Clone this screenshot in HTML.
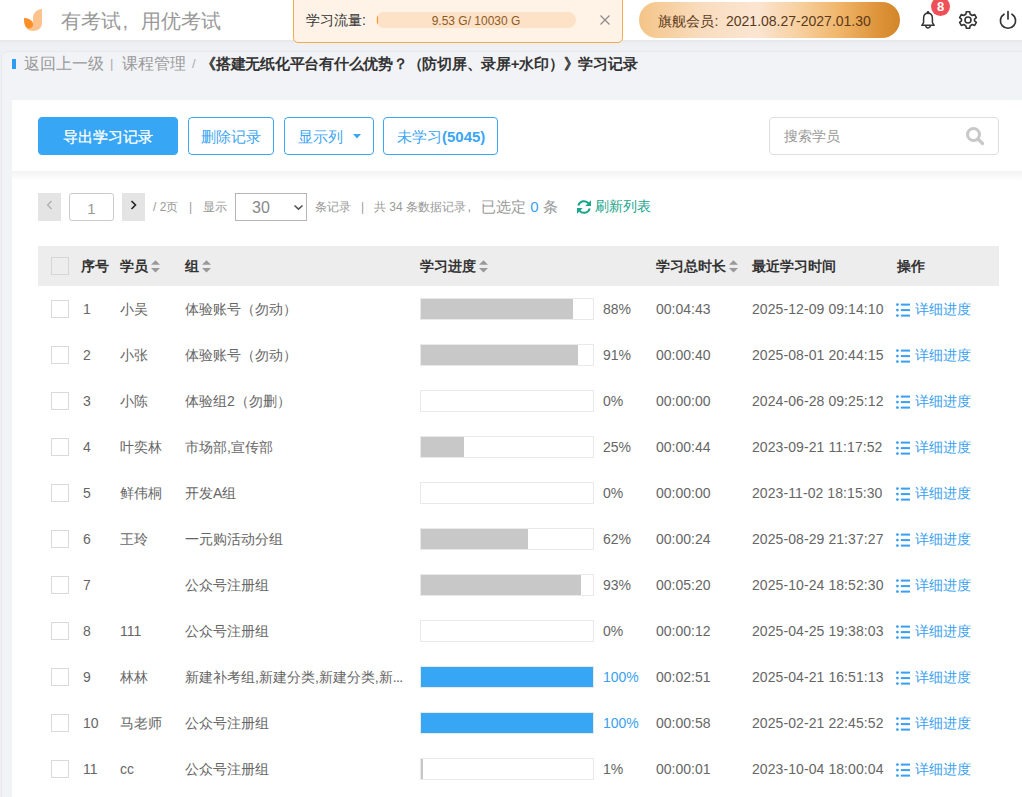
<!DOCTYPE html><html><head><meta charset="utf-8"><style>*{box-sizing:border-box;margin:0;padding:0}
html,body{width:1022px;height:797px;overflow:hidden}
body{background:#eef0f4;font-family:"Liberation Sans",sans-serif;position:relative;color:#666}
.abs{position:absolute}
#hdr{position:absolute;left:0;top:0;width:1022px;height:40px;background:#fff}
#band{position:absolute;left:0;top:40px;width:1022px;height:12px;background:linear-gradient(#e4e6ea,#eef0f4 4px,#eef0f4)}
#cont{position:absolute;left:1px;top:51px;width:1030px;height:760px;background:#f2f3f7;border-radius:7px;border:1px solid #e8e9ed}
.logo{position:absolute;left:22px;top:7px}
.slogan{position:absolute;left:61px;top:7px;font-size:20px;line-height:28px;color:#999;white-space:nowrap}
#flow{position:absolute;left:293px;top:-2px;width:330px;height:45px;background:#fff3e8;border:1px solid #f5a94e;border-radius:0 0 5px 5px}
#flow .lbl{position:absolute;left:12px;top:11px;font-size:14px;line-height:20px;color:#333}
#flow .pill{position:absolute;left:82px;top:13px;width:200px;height:16px;border-radius:8px;background:#fde2c8;overflow:hidden}
#flow .pill i{position:absolute;left:0.5px;top:4.3px;width:1.7px;height:7.4px;border-radius:50%;background:#f7931e}
#flow .pill span{position:absolute;left:0;top:1px;width:100%;text-align:center;font-size:12px;line-height:16px;color:#8d5a25}
#flow .x{position:absolute;left:305px;top:15px;transform:scale(0.9)}
#vip{position:absolute;left:639px;top:2px;width:261px;height:36px;border-radius:18px;background:linear-gradient(90deg,#f4c487 0%,#f9dcbd 23%,#fbe5d2 45%,#f7cf9d 62%,#f0b56a 77%,#dd9338 92%,#d3862a 100%);font-size:14px;line-height:38px;color:#5b3a1a;padding-left:19px;white-space:nowrap}
.badge{position:absolute;left:931px;top:-3px;width:19px;height:19px;border-radius:50%;background:#ef4f57;color:#fff;font-size:13px;font-weight:bold;text-align:center;line-height:19px}
.crumb{position:absolute;top:53px;font-size:16px;line-height:22px;color:#999;white-space:nowrap}
.bluebar{position:absolute;left:12px;top:59px;width:4px;height:10px;background:#2d9cf4}
#card{position:absolute;left:12px;top:100px;width:1010px;height:71px;background:#fff}
#card2{position:absolute;left:12px;top:171px;width:1010px;height:640px;background:#fff}
#shadow{position:absolute;left:12px;top:171px;width:1010px;height:9px;background:linear-gradient(#f3f3f3,#f7f7f7 40%,#fff)}
.btn{position:absolute;top:117px;height:38px;border:1px solid #3ba6f4;border-radius:4px;color:#3ba6f4;font-size:15px;line-height:37px;white-space:nowrap}
.btn.pri{background:#36a6f5;border-color:#36a6f5;color:#fff;-webkit-text-stroke:0.3px #fff}
.search{position:absolute;left:769px;top:117px;width:230px;height:38px;border:1px solid #dedede;border-radius:4px}
.search span{position:absolute;left:14px;top:0;font-size:14px;line-height:36px;color:#999}
.pg{position:absolute;top:193px;height:28px;font-size:12px;line-height:28px;color:#999;white-space:nowrap}
.pgbtn{position:absolute;top:193px;width:23px;height:28px;background:#e4e4e4}
#thead{position:absolute;left:38px;top:246px;width:961px;height:40px;background:#ededed}
.th{position:absolute;top:246px;font-size:14px;line-height:40px;font-weight:bold;color:#333;white-space:nowrap}
.sort{display:inline-block;vertical-align:middle;margin-left:3px;margin-top:-1px}
.cb{position:absolute;left:51px;top:14px;width:18px;height:18px;border:1px solid #dadada;background:#fff}
.row{position:absolute;left:0;width:1022px;height:46px}
.c{position:absolute;top:0;font-size:14px;line-height:46px;color:#666;white-space:nowrap}
.c1{left:83px}.c2{left:120px}.c3{left:185px}.pct{left:603px}.c5{left:656px}.c6{left:752px;letter-spacing:0.08px}.c7{left:896px;color:#3a9ff0}
.blue{color:#3a9ff0}
.bar{position:absolute;left:420px;top:12px;width:174px;height:22px;border:1px solid #e9e9e9;background:#fff}
.fill{position:absolute;left:0;top:0;height:20px;background:#c8c8c8}
.fill.full{background:#36a6f5;width:172px}
.li{fill:#3a9ff0;position:absolute;left:0;top:17px}
.c7 span{margin-left:19px}
</style></head><body>
<div id="band"></div>
<div id="cont"></div>
<div id="hdr"></div>
<svg class="logo" width="24" height="28" viewBox="22 7 24 28">
<path d="M42 9 L42 23 C42 28 38 31 33 31 C28 31 24 28 24 18 C28 18 31 20 33 22 L33 18 C33 13 37 9 42 9 Z" fill="#fdc38e"/>
<path d="M24 18 C29 18 33 21 33 25 C33 27 31 28.5 29 28.5 C26 28.5 24 25 24 18 Z" fill="#fd8f26"/>
</svg>
<div class="slogan">有考试<span style="display:inline-block;width:20px;padding-left:1.5px">,</span>用优考试</div>
<div id="flow"><div class="lbl">学习流量:</div><div class="pill"><i></i><span>9.53 G/ 10030 G</span></div>
<svg class="x" width="12" height="12" viewBox="0 0 12 12"><path d="M1 1L11 11M11 1L1 11" stroke="#888" stroke-width="1.2"/></svg></div>
<div id="vip">旗舰会员<span style="display:inline-block;width:12px;padding-left:0.5px">:</span>2021.08.27-2027.01.30</div>
<svg class="abs" style="left:919px;top:10px" width="18" height="20" viewBox="0 0 18 20"><path d="M9 3.2 C6.2 3.2 4.6 5.3 4.6 8.2 L4.6 12.6 L2.8 15.3 L15.2 15.3 L13.4 12.6 L13.4 8.2 C13.4 5.3 11.8 3.2 9 3.2 Z" fill="none" stroke="#333" stroke-width="1.5" stroke-linejoin="round"/><path d="M6.7 15.6 A2.3 2.3 0 0 0 11.3 15.6" fill="none" stroke="#333" stroke-width="1.5"/><circle cx="9" cy="2.4" r="1.4" fill="#333"/></svg>
<div class="badge">8</div>
<svg class="abs" style="left:958px;top:10px" width="20" height="20" viewBox="0 0 20 20"><path fill="none" stroke="#333" stroke-width="1.6" stroke-linejoin="round" d="M8.3 1.8 L11.7 1.8 L12.2 4.3 L14.3 5.5 L16.7 4.6 L18.4 7.6 L16.5 9.2 L16.5 10.8 L18.4 12.4 L16.7 15.4 L14.3 14.5 L12.2 15.7 L11.7 18.2 L8.3 18.2 L7.8 15.7 L5.7 14.5 L3.3 15.4 L1.6 12.4 L3.5 10.8 L3.5 9.2 L1.6 7.6 L3.3 4.6 L5.7 5.5 L7.8 4.3 Z"/><circle cx="10" cy="10" r="3" fill="none" stroke="#333" stroke-width="1.6"/></svg>
<svg class="abs" style="left:998px;top:10px" width="20" height="20" viewBox="0 0 20 20"><path fill="none" stroke="#333" stroke-width="1.7" stroke-linecap="round" d="M6 4.2 A7.6 7.6 0 1 0 14 4.2"/><path stroke="#333" stroke-width="1.7" stroke-linecap="round" d="M10 1.5 L10 9"/></svg>

<div class="bluebar"></div>
<div class="crumb" style="left:24px">返回上一级</div>
<div class="crumb" style="left:110px;font-size:13px;color:#aaa">|</div>
<div class="crumb" style="left:122px">课程管理</div>
<div class="crumb" style="left:192px;font-size:13px;color:#aaa">/</div>
<div class="crumb" style="left:201px;font-size:15px;font-weight:bold;color:#333;letter-spacing:-0.25px">《搭建无纸化平台有什么优势？（防切屏、录屏+水印）》学习记录</div>

<div id="card2"></div>
<div id="shadow"></div>
<div id="card"></div>
<div class="btn pri" style="left:38px;width:140px;text-align:center">导出学习记录</div>
<div class="btn" style="left:188px;width:86px;text-align:center">删除记录</div>
<div class="btn" style="left:284px;width:90px;padding-left:13px">显示列<svg class="abs" style="left:68px;top:16px" width="8" height="5" viewBox="0 0 8 5"><path d="M0 0L8 0L4 4.5Z" fill="#3ba6f4"/></svg></div>
<div class="btn" style="left:383px;width:115px;padding-left:13px">未学习<b>(5045)</b></div>
<div class="search"><span>搜索学员</span><svg class="abs" style="left:195px;top:8px" width="20" height="20" viewBox="0 0 20 20"><circle cx="8.5" cy="8.5" r="6" fill="none" stroke="#c8c8c8" stroke-width="3"/><path d="M13 13L17.5 17.5" stroke="#c8c8c8" stroke-width="3.2" stroke-linecap="round"/></svg></div>

<div class="pgbtn" style="left:38px"><svg class="abs" style="left:8px;top:7px" width="7" height="10" viewBox="0 0 7 10"><path d="M5.5 1L1.5 5L5.5 9" fill="none" stroke="#aaa" stroke-width="1.1"/></svg></div>
<div class="abs" style="left:69px;top:193px;width:45px;height:28px;border:1px solid #ccc;border-radius:3px;background:#fff;text-align:center;font-size:15px;line-height:29px;color:#999">1</div>
<div class="pgbtn" style="left:122px"><svg class="abs" style="left:8px;top:7px" width="7" height="10" viewBox="0 0 7 10"><path d="M1.5 1L5.5 5L1.5 9" fill="none" stroke="#222" stroke-width="1.6"/></svg></div>
<div class="pg" style="left:153px">/ 2页</div>
<div class="pg" style="left:189px">|</div>
<div class="pg" style="left:203px">显示</div>
<div class="abs" style="left:235px;top:193px;width:72px;height:28px;border:1px solid #b5b5b5;background:#fff;font-size:16px;line-height:28px;color:#888;padding-left:16px">30<svg class="abs" style="left:57px;top:10px" width="11" height="7" viewBox="0 0 11 7"><path d="M1.5 1.5L5.5 5.2L9.5 1.5" fill="none" stroke="#555" stroke-width="1.6"/></svg></div>
<div class="pg" style="left:315px">条记录</div>
<div class="pg" style="left:361px">|</div>
<div class="pg" style="left:374px">共 34 条数据记录<span style="display:inline-block;width:12px;padding-left:1.5px;font-size:13px">,</span></div>
<div class="pg" style="left:481px;font-size:15px;color:#999">已选定 <span style="color:#3a9ff0">0</span> 条</div>
<svg class="abs" style="left:577px;top:200px" width="14" height="14" viewBox="0 0 14 14"><path d="M1.3 5.6 A5.9 5.9 0 0 1 11.6 3.4" fill="none" stroke="#1aa58c" stroke-width="2"/><path d="M14 0.2 L14 5.9 L8.3 5.9 Z" fill="#1aa58c"/><path d="M12.7 8.4 A5.9 5.9 0 0 1 2.4 10.6" fill="none" stroke="#1aa58c" stroke-width="2"/><path d="M0 13.8 L0 8.1 L5.7 8.1 Z" fill="#1aa58c"/></svg>
<div class="pg" style="left:595px;top:192px;font-size:14px;color:#1aa58c">刷新列表</div>

<div id="thead"></div>
<div class="abs" style="left:51px;top:257px;width:18px;height:18px;border:1px solid #d6d6d6"></div>
<div class="th" style="left:81px">序号</div>
<div class="th" style="left:120px">学员<svg class="sort" width="9" height="13" viewBox="0 0 9 13"><path d="M4.5 0.3L9 4.8L0 4.8Z M4.5 12.5L9 8L0 8Z" fill="#999"/></svg></div>
<div class="th" style="left:185px">组<svg class="sort" width="9" height="13" viewBox="0 0 9 13"><path d="M4.5 0.3L9 4.8L0 4.8Z M4.5 12.5L9 8L0 8Z" fill="#999"/></svg></div>
<div class="th" style="left:420px">学习进度<svg class="sort" width="9" height="13" viewBox="0 0 9 13"><path d="M4.5 0.3L9 4.8L0 4.8Z M4.5 12.5L9 8L0 8Z" fill="#999"/></svg></div>
<div class="th" style="left:656px">学习总时长<svg class="sort" width="9" height="13" viewBox="0 0 9 13"><path d="M4.5 0.3L9 4.8L0 4.8Z M4.5 12.5L9 8L0 8Z" fill="#999"/></svg></div>
<div class="th" style="left:752px">最近学习时间</div>
<div class="th" style="left:897px">操作</div>

<div class="row" style="top:286px"><div class="cb"></div><div class="c c1">1</div><div class="c c2">小吴</div><div class="c c3">体验账号（勿动）</div><div class="bar"><div class="fill" style="width:152px"></div></div><div class="c pct">88%</div><div class="c c5">00:04:43</div><div class="c c6">2025-12-09 09:14:10</div><div class="c c7"><svg class="li" width="14" height="15" viewBox="0 0 14 15"><circle cx="1.4" cy="1.6" r="1.4"/><rect x="4.8" y="0.6" width="9.2" height="2"/><circle cx="1.4" cy="7.1" r="1.4"/><rect x="4.8" y="6.1" width="9.2" height="2"/><circle cx="1.4" cy="12.6" r="1.4"/><rect x="4.8" y="11.6" width="9.2" height="2"/></svg><span>详细进度</span></div></div>
<div class="row" style="top:332px"><div class="cb"></div><div class="c c1">2</div><div class="c c2">小张</div><div class="c c3">体验账号（勿动）</div><div class="bar"><div class="fill" style="width:157px"></div></div><div class="c pct">91%</div><div class="c c5">00:00:40</div><div class="c c6">2025-08-01 20:44:15</div><div class="c c7"><svg class="li" width="14" height="15" viewBox="0 0 14 15"><circle cx="1.4" cy="1.6" r="1.4"/><rect x="4.8" y="0.6" width="9.2" height="2"/><circle cx="1.4" cy="7.1" r="1.4"/><rect x="4.8" y="6.1" width="9.2" height="2"/><circle cx="1.4" cy="12.6" r="1.4"/><rect x="4.8" y="11.6" width="9.2" height="2"/></svg><span>详细进度</span></div></div>
<div class="row" style="top:378px"><div class="cb"></div><div class="c c1">3</div><div class="c c2">小陈</div><div class="c c3">体验组2（勿删）</div><div class="bar"><div class="fill" style="width:0px"></div></div><div class="c pct">0%</div><div class="c c5">00:00:00</div><div class="c c6">2024-06-28 09:25:12</div><div class="c c7"><svg class="li" width="14" height="15" viewBox="0 0 14 15"><circle cx="1.4" cy="1.6" r="1.4"/><rect x="4.8" y="0.6" width="9.2" height="2"/><circle cx="1.4" cy="7.1" r="1.4"/><rect x="4.8" y="6.1" width="9.2" height="2"/><circle cx="1.4" cy="12.6" r="1.4"/><rect x="4.8" y="11.6" width="9.2" height="2"/></svg><span>详细进度</span></div></div>
<div class="row" style="top:424px"><div class="cb"></div><div class="c c1">4</div><div class="c c2">叶奕林</div><div class="c c3">市场部,宣传部</div><div class="bar"><div class="fill" style="width:43px"></div></div><div class="c pct">25%</div><div class="c c5">00:00:44</div><div class="c c6">2023-09-21 11:17:52</div><div class="c c7"><svg class="li" width="14" height="15" viewBox="0 0 14 15"><circle cx="1.4" cy="1.6" r="1.4"/><rect x="4.8" y="0.6" width="9.2" height="2"/><circle cx="1.4" cy="7.1" r="1.4"/><rect x="4.8" y="6.1" width="9.2" height="2"/><circle cx="1.4" cy="12.6" r="1.4"/><rect x="4.8" y="11.6" width="9.2" height="2"/></svg><span>详细进度</span></div></div>
<div class="row" style="top:470px"><div class="cb"></div><div class="c c1">5</div><div class="c c2">鲜伟桐</div><div class="c c3">开发A组</div><div class="bar"><div class="fill" style="width:0px"></div></div><div class="c pct">0%</div><div class="c c5">00:00:00</div><div class="c c6">2023-11-02 18:15:30</div><div class="c c7"><svg class="li" width="14" height="15" viewBox="0 0 14 15"><circle cx="1.4" cy="1.6" r="1.4"/><rect x="4.8" y="0.6" width="9.2" height="2"/><circle cx="1.4" cy="7.1" r="1.4"/><rect x="4.8" y="6.1" width="9.2" height="2"/><circle cx="1.4" cy="12.6" r="1.4"/><rect x="4.8" y="11.6" width="9.2" height="2"/></svg><span>详细进度</span></div></div>
<div class="row" style="top:516px"><div class="cb"></div><div class="c c1">6</div><div class="c c2">王玲</div><div class="c c3">一元购活动分组</div><div class="bar"><div class="fill" style="width:107px"></div></div><div class="c pct">62%</div><div class="c c5">00:00:24</div><div class="c c6">2025-08-29 21:37:27</div><div class="c c7"><svg class="li" width="14" height="15" viewBox="0 0 14 15"><circle cx="1.4" cy="1.6" r="1.4"/><rect x="4.8" y="0.6" width="9.2" height="2"/><circle cx="1.4" cy="7.1" r="1.4"/><rect x="4.8" y="6.1" width="9.2" height="2"/><circle cx="1.4" cy="12.6" r="1.4"/><rect x="4.8" y="11.6" width="9.2" height="2"/></svg><span>详细进度</span></div></div>
<div class="row" style="top:562px"><div class="cb"></div><div class="c c1">7</div><div class="c c2"></div><div class="c c3">公众号注册组</div><div class="bar"><div class="fill" style="width:160px"></div></div><div class="c pct">93%</div><div class="c c5">00:05:20</div><div class="c c6">2025-10-24 18:52:30</div><div class="c c7"><svg class="li" width="14" height="15" viewBox="0 0 14 15"><circle cx="1.4" cy="1.6" r="1.4"/><rect x="4.8" y="0.6" width="9.2" height="2"/><circle cx="1.4" cy="7.1" r="1.4"/><rect x="4.8" y="6.1" width="9.2" height="2"/><circle cx="1.4" cy="12.6" r="1.4"/><rect x="4.8" y="11.6" width="9.2" height="2"/></svg><span>详细进度</span></div></div>
<div class="row" style="top:608px"><div class="cb"></div><div class="c c1">8</div><div class="c c2">111</div><div class="c c3">公众号注册组</div><div class="bar"><div class="fill" style="width:0px"></div></div><div class="c pct">0%</div><div class="c c5">00:00:12</div><div class="c c6">2025-04-25 19:38:03</div><div class="c c7"><svg class="li" width="14" height="15" viewBox="0 0 14 15"><circle cx="1.4" cy="1.6" r="1.4"/><rect x="4.8" y="0.6" width="9.2" height="2"/><circle cx="1.4" cy="7.1" r="1.4"/><rect x="4.8" y="6.1" width="9.2" height="2"/><circle cx="1.4" cy="12.6" r="1.4"/><rect x="4.8" y="11.6" width="9.2" height="2"/></svg><span>详细进度</span></div></div>
<div class="row" style="top:654px"><div class="cb"></div><div class="c c1">9</div><div class="c c2">林林</div><div class="c c3">新建补考组,新建分类,新建分类,新<span style='letter-spacing:-0.6px'>...</span></div><div class="bar"><div class="fill full" style="width:172px"></div></div><div class="c pct blue">100%</div><div class="c c5">00:02:51</div><div class="c c6">2025-04-21 16:51:13</div><div class="c c7"><svg class="li" width="14" height="15" viewBox="0 0 14 15"><circle cx="1.4" cy="1.6" r="1.4"/><rect x="4.8" y="0.6" width="9.2" height="2"/><circle cx="1.4" cy="7.1" r="1.4"/><rect x="4.8" y="6.1" width="9.2" height="2"/><circle cx="1.4" cy="12.6" r="1.4"/><rect x="4.8" y="11.6" width="9.2" height="2"/></svg><span>详细进度</span></div></div>
<div class="row" style="top:700px"><div class="cb"></div><div class="c c1">10</div><div class="c c2">马老师</div><div class="c c3">公众号注册组</div><div class="bar"><div class="fill full" style="width:172px"></div></div><div class="c pct blue">100%</div><div class="c c5">00:00:58</div><div class="c c6">2025-02-21 22:45:52</div><div class="c c7"><svg class="li" width="14" height="15" viewBox="0 0 14 15"><circle cx="1.4" cy="1.6" r="1.4"/><rect x="4.8" y="0.6" width="9.2" height="2"/><circle cx="1.4" cy="7.1" r="1.4"/><rect x="4.8" y="6.1" width="9.2" height="2"/><circle cx="1.4" cy="12.6" r="1.4"/><rect x="4.8" y="11.6" width="9.2" height="2"/></svg><span>详细进度</span></div></div>
<div class="row" style="top:746px"><div class="cb"></div><div class="c c1">11</div><div class="c c2">cc</div><div class="c c3">公众号注册组</div><div class="bar"><div class="fill" style="width:2px"></div></div><div class="c pct">1%</div><div class="c c5">00:00:01</div><div class="c c6">2023-10-04 18:00:04</div><div class="c c7"><svg class="li" width="14" height="15" viewBox="0 0 14 15"><circle cx="1.4" cy="1.6" r="1.4"/><rect x="4.8" y="0.6" width="9.2" height="2"/><circle cx="1.4" cy="7.1" r="1.4"/><rect x="4.8" y="6.1" width="9.2" height="2"/><circle cx="1.4" cy="12.6" r="1.4"/><rect x="4.8" y="11.6" width="9.2" height="2"/></svg><span>详细进度</span></div></div>
</body></html>
